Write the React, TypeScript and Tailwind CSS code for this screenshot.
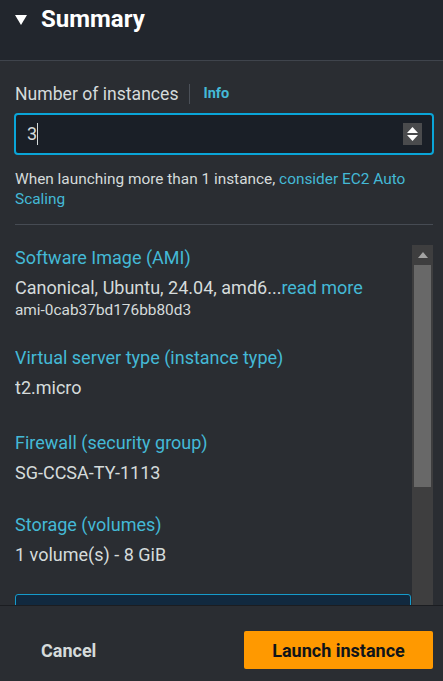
import React from "react";

const font = { fontFamily: "Roboto, 'Noto Sans', sans-serif" };

function Field({ label, value, extra, pb }: { label: string; value: React.ReactNode; extra?: string; pb: string }) {
  return (
    <div className={pb}>
      <div className="text-[18px] leading-6 text-[#44b9d6]">{label}</div>
      <div className="mt-[6px] text-[18px] leading-6 text-[#d5dbdb]">{value}</div>
      {extra && <div className="text-[15.4px] leading-5 text-[#d5dbdb]">{extra}</div>}
    </div>
  );
}

export default function App() {
  return (
    <div className="w-[443px] h-[681px] overflow-hidden bg-[#2a2d32] flex flex-col" style={font}>
      {/* header */}
      <div className="h-[61px] shrink-0 bg-[#22262d] border-b border-[#3f444c] flex items-start px-[15px] pt-[4px]">
        <div className="flex items-center h-[30px] gap-[14px]">
          <svg width="12" height="10" viewBox="0 0 12 10" className="mt-[1px]">
            <path d="M0 0 H12 L6 10 Z" fill="#ffffff" />
          </svg>
          <span className="text-[24px] font-bold text-white leading-[30px]">Summary</span>
        </div>
      </div>

      {/* body */}
      <div className="flex-1 min-h-0 flex flex-col pl-[15px] pr-[10px] pt-[21px]">
        <div className="flex items-center h-6">
          <span className="text-[17.6px] text-[#d5dbdb]">Number of instances</span>
          <span className="w-px h-[20px] bg-[#4b5058] ml-[11px] mr-[13px]" />
          <span className="text-[14.5px] font-bold text-[#44b9d6]">Info</span>
        </div>
        <div className="mt-[7px] h-[42px] -mx-px rounded-[4px] border-2 border-[#0aa5d8] bg-[#1a1f27] flex items-center pl-[11px] pr-[10px]">
          <span className="text-[18px] text-[#d5dbdb] leading-6">3</span>
          <span className="w-px h-[22px] bg-[#d5dbdb]" />
          <div className="ml-auto w-[19px] h-[22px] bg-[#4a4b4d] flex flex-col items-center justify-center gap-[2px]">
            <svg width="11" height="6" viewBox="0 0 11 6"><path d="M0 6 L5.5 0 L11 6 Z" fill="#ffffff" /></svg>
            <svg width="11" height="6" viewBox="0 0 11 6"><path d="M0 0 H11 L5.5 6 Z" fill="#ffffff" /></svg>
          </div>
        </div>
        <p className="mt-[14px] text-[15.4px] leading-5 text-[#d5dbdb]">
          When launching more than 1 instance, <span className="text-[#44b9d6]">consider EC2 Auto Scaling</span>
        </p>
        <div className="mt-[15px] h-px bg-[#464b53]" />

        {/* scroll region */}
        <div className="mt-[20px] flex-1 min-h-0 flex overflow-hidden">
          <div className="flex-1 min-w-0 pt-px">
            <Field
              label="Software Image (AMI)"
              value={
                <>
                  Canonical, Ubuntu, 24.04, amd6...<span className="text-[#44b9d6]">read more</span>
                </>
              }
              extra="ami-0cab37bd176bb80d3"
              pb="pb-[26px]"
            />
            <Field label="Virtual server type (instance type)" value="t2.micro" pb="pb-[31px]" />
            <Field label="Firewall (security group)" value="SG-CCSA-TY-1113" pb="pb-[28px]" />
            <Field label="Storage (volumes)" value="1 volume(s) - 8 GiB" pb="pb-[27px]" />
            <div className="h-[40px] mr-[1px] rounded-t-[3px] border border-[#159bcb] bg-[#11293f]" />
          </div>
          <div className="w-[21px] shrink-0 bg-[#3e3e3f] flex flex-col items-center">
            <div className="h-[20px] flex items-center justify-center">
              <svg width="10" height="6" viewBox="0 0 10 6"><path d="M0 6 L5 0 L10 6 Z" fill="#a3a3a3" /></svg>
            </div>
            <div className="w-[17px] h-[222px] bg-[#686868]" />
          </div>
        </div>
      </div>

      {/* footer */}
      <div className="h-[76px] shrink-0 border-t border-[#1b1d21] bg-[#2a2d32] flex items-start pt-[25px] pl-[41px] pr-[10px]">
        <span className="h-[38px] flex items-center text-[18px] font-bold text-[#d5dbdb]">Cancel</span>
        <button className="ml-auto w-[189px] h-[38px] rounded-[2px] bg-[#ff9900] text-[18px] font-bold text-[#0f141a]">
          Launch instance
        </button>
      </div>
    </div>
  );
}
